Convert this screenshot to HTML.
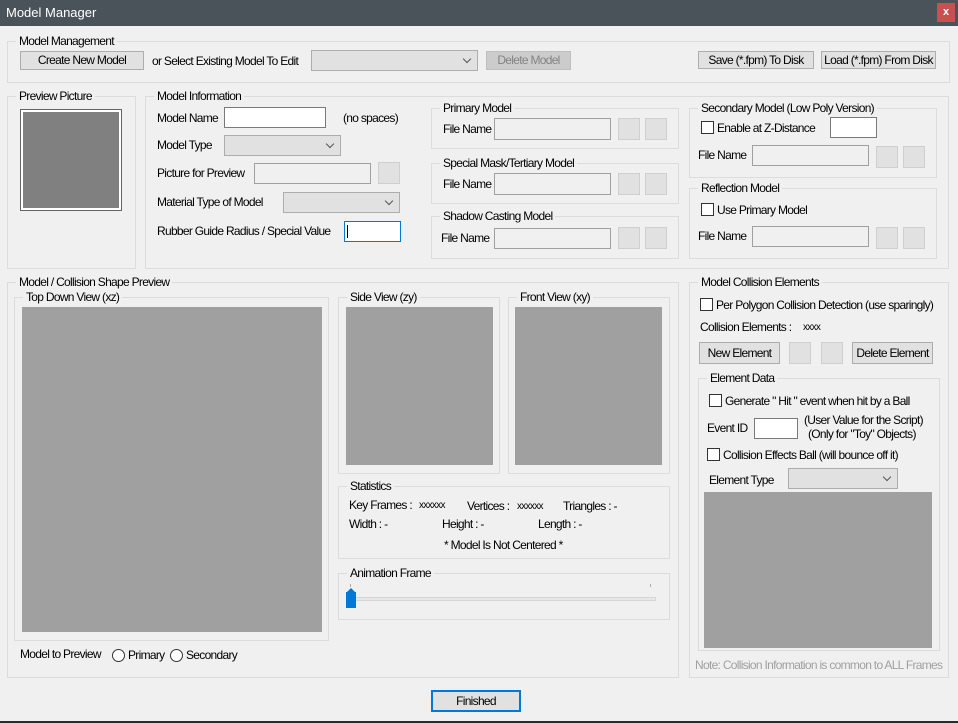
<!DOCTYPE html>
<html><head><meta charset="utf-8"><style>
*{box-sizing:border-box;margin:0;padding:0}
body{width:958px;height:723px;background:#f0f0f0;position:relative;overflow:hidden;font-family:"Liberation Sans",sans-serif;font-size:12px;color:#000}
.a{position:absolute}
.t{position:absolute;white-space:nowrap;line-height:14px;letter-spacing:-0.7px}
.g{position:absolute;border:1px solid #dcdcdc}
.g>.l{position:absolute;top:-8px;left:8px;background:#f0f0f0;padding:0 3px;white-space:nowrap;line-height:14px;letter-spacing:-0.7px}
.in{position:absolute;background:#fff;border:1px solid #7a7a7a}
.di{position:absolute;background:#f0f0f0;border:1px solid #a0a0a0}
.bt{position:absolute;background:#e1e1e1;border:1px solid #adadad;text-align:center;line-height:17px;letter-spacing:-0.7px;white-space:nowrap}
.sb{position:absolute;background:#e1e1e1;border:1px solid #cfcfcf}
.cb{position:absolute;background:#e1e1e1;border:1px solid #adadad}
.cb:after{content:"";position:absolute;right:7px;top:5px;width:5px;height:5px;border-right:1px solid #555;border-bottom:1px solid #555;transform:rotate(45deg)}
.ck{position:absolute;width:13px;height:13px;background:#fff;border:1px solid #333}
.gr{position:absolute;background:#a0a0a0}
.rd{position:absolute;width:13px;height:13px;border-radius:50%;border:1px solid #333;background:#fff}
</style></head><body>
<div class="a" style="left:0;top:0;width:958px;height:26px;background:#4b535a"></div>
<div class="t" style="left:6px;top:6px;color:#fff;font-size:13px;letter-spacing:0">Model Manager</div>
<div class="a" style="left:937px;top:3px;width:18px;height:19px;background:#c75050;color:#fff;font-size:11px;font-weight:bold;text-align:center;line-height:18px">x</div>

<div class="g" style="left:7px;top:41px;width:943px;height:42px"><span class="l">Model Management</span></div>
<div class="bt" style="left:20px;top:51px;width:124px;height:19px">Create New Model</div>
<div class="t" style="left:152px;top:54px">or Select Existing Model To Edit</div>
<div class="cb" style="left:311px;top:50px;width:167px;height:21px"></div>
<div class="bt" style="left:486px;top:51px;width:85px;height:19px;background:#cccccc;border-color:#bfbfbf;color:#838383">Delete Model</div>
<div class="bt" style="left:698px;top:51px;width:116px;height:18px">Save (*.fpm) To Disk</div>
<div class="bt" style="left:821px;top:51px;width:115px;height:18px">Load (*.fpm) From Disk</div>

<div class="g" style="left:7px;top:96px;width:129px;height:173px"><span class="l">Preview Picture</span></div>
<div class="a" style="left:20px;top:109px;width:102px;height:102px;border:1px solid #646464;background:#fff;padding:2px"><div style="width:100%;height:100%;background:#808080"></div></div>

<div class="g" style="left:145px;top:96px;width:804px;height:173px"><span class="l">Model Information</span></div>
<div class="t" style="left:157px;top:111px">Model Name</div>
<div class="in" style="left:224px;top:107px;width:102px;height:21px"></div>
<div class="t" style="left:343px;top:111px">(no spaces)</div>
<div class="t" style="left:157px;top:138px">Model Type</div>
<div class="cb" style="left:224px;top:135px;width:117px;height:21px"></div>
<div class="t" style="left:157px;top:166px">Picture for Preview</div>
<div class="di" style="left:254px;top:163px;width:117px;height:21px"></div>
<div class="sb" style="left:378px;top:162px;width:22px;height:22px"></div>
<div class="t" style="left:157px;top:195px">Material Type of Model</div>
<div class="cb" style="left:283px;top:192px;width:117px;height:21px"></div>
<div class="t" style="left:157px;top:224px">Rubber Guide Radius / Special Value</div>
<div class="in" style="left:344px;top:221px;width:57px;height:21px;border-color:#0078d7"></div>
<div class="a" style="left:347px;top:225px;width:1px;height:13px;background:#000"></div>

<div class="g" style="left:431px;top:108px;width:248px;height:41px"><span class="l">Primary Model</span></div>
<div class="t" style="left:443px;top:122px">File Name</div>
<div class="di" style="left:494px;top:118px;width:117px;height:22px"></div>
<div class="sb" style="left:618px;top:118px;width:22px;height:22px"></div>
<div class="sb" style="left:645px;top:118px;width:22px;height:22px"></div>
<div class="g" style="left:431px;top:163px;width:248px;height:41px"><span class="l">Special Mask/Tertiary Model</span></div>
<div class="t" style="left:443px;top:177px">File Name</div>
<div class="di" style="left:494px;top:173px;width:117px;height:22px"></div>
<div class="sb" style="left:618px;top:173px;width:22px;height:22px"></div>
<div class="sb" style="left:645px;top:173px;width:22px;height:22px"></div>
<div class="g" style="left:431px;top:216px;width:248px;height:43px"><span class="l">Shadow Casting Model</span></div>
<div class="t" style="left:441px;top:231px">File Name</div>
<div class="di" style="left:494px;top:228px;width:117px;height:21px"></div>
<div class="sb" style="left:618px;top:227px;width:22px;height:22px"></div>
<div class="sb" style="left:645px;top:227px;width:22px;height:22px"></div>

<div class="g" style="left:689px;top:108px;width:248px;height:70px"><span class="l">Secondary Model (Low Poly Version)</span></div>
<div class="ck" style="left:701px;top:121px"></div>
<div class="t" style="left:717px;top:121px">Enable at Z-Distance</div>
<div class="in" style="left:830px;top:117px;width:47px;height:21px"></div>
<div class="t" style="left:698px;top:148px">File Name</div>
<div class="di" style="left:752px;top:145px;width:117px;height:21px"></div>
<div class="sb" style="left:876px;top:146px;width:22px;height:22px"></div>
<div class="sb" style="left:903px;top:146px;width:22px;height:22px"></div>
<div class="g" style="left:689px;top:188px;width:248px;height:71px"><span class="l">Reflection Model</span></div>
<div class="ck" style="left:701px;top:203px"></div>
<div class="t" style="left:717px;top:203px">Use Primary Model</div>
<div class="t" style="left:698px;top:229px">File Name</div>
<div class="di" style="left:752px;top:226px;width:117px;height:21px"></div>
<div class="sb" style="left:876px;top:227px;width:22px;height:22px"></div>
<div class="sb" style="left:903px;top:227px;width:22px;height:22px"></div>

<div class="g" style="left:7px;top:282px;width:672px;height:396px"><span class="l">Model / Collision Shape Preview</span></div>
<div class="g" style="left:14px;top:297px;width:315px;height:344px"><span class="l">Top Down View (xz)</span></div>
<div class="gr" style="left:22px;top:307px;width:300px;height:325px"></div>
<div class="g" style="left:338px;top:297px;width:162px;height:177px"><span class="l">Side View (zy)</span></div>
<div class="gr" style="left:346px;top:307px;width:147px;height:158px"></div>
<div class="g" style="left:508px;top:297px;width:162px;height:177px"><span class="l">Front View (xy)</span></div>
<div class="gr" style="left:515px;top:307px;width:147px;height:158px"></div>
<div class="g" style="left:338px;top:486px;width:332px;height:73px"><span class="l">Statistics</span></div>
<div class="t" style="left:349px;top:498px">Key Frames :</div>
<div class="t" style="left:419px;top:499px;font-size:10px">xxxxxx</div>
<div class="t" style="left:467px;top:499px">Vertices :</div>
<div class="t" style="left:517px;top:500px;font-size:10px">xxxxxx</div>
<div class="t" style="left:563px;top:499px">Triangles :  -</div>
<div class="t" style="left:349px;top:517px">Width :  -</div>
<div class="t" style="left:442px;top:517px">Height :  -</div>
<div class="t" style="left:538px;top:517px">Length :  -</div>
<div class="t" style="left:444px;top:538px">* Model Is Not Centered *</div>
<div class="g" style="left:338px;top:573px;width:332px;height:47px"><span class="l">Animation Frame</span></div>
<div class="a" style="left:348px;top:597px;width:308px;height:4px;background:#e7e7e7;border:1px solid #d6d6d6"></div>
<div class="a" style="left:350px;top:584px;width:1px;height:3px;background:#aaa"></div>
<div class="a" style="left:650px;top:584px;width:1px;height:3px;background:#aaa"></div>
<div class="a" style="left:346px;top:592px;width:10px;height:16px;background:#0078d7"></div>
<div class="a" style="left:346px;top:588px;width:0;height:0;border-left:5px solid transparent;border-right:5px solid transparent;border-bottom:5px solid #0078d7"></div>
<div class="t" style="left:20px;top:647px">Model to Preview</div>
<div class="rd" style="left:112px;top:649px"></div>
<div class="t" style="left:128px;top:648px">Primary</div>
<div class="rd" style="left:170px;top:649px"></div>
<div class="t" style="left:186px;top:648px">Secondary</div>

<div class="g" style="left:689px;top:282px;width:260px;height:396px"><span class="l">Model Collision Elements</span></div>
<div class="ck" style="left:700px;top:298px"></div>
<div class="t" style="left:716px;top:298px">Per Polygon Collision Detection (use sparingly)</div>
<div class="t" style="left:700px;top:320px">Collision Elements :</div>
<div class="t" style="left:803px;top:321px;font-size:10px">xxxx</div>
<div class="bt" style="left:699px;top:342px;width:81px;height:22px;line-height:20px">New Element</div>
<div class="sb" style="left:789px;top:342px;width:22px;height:22px"></div>
<div class="sb" style="left:821px;top:342px;width:22px;height:22px"></div>
<div class="bt" style="left:852px;top:342px;width:81px;height:22px;line-height:20px">Delete Element</div>
<div class="g" style="left:698px;top:378px;width:242px;height:273px"><span class="l">Element Data</span></div>
<div class="ck" style="left:709px;top:394px"></div>
<div class="t" style="left:725px;top:394px">Generate " Hit " event when hit by a Ball</div>
<div class="t" style="left:707px;top:421px">Event ID</div>
<div class="in" style="left:754px;top:418px;width:44px;height:21px"></div>
<div class="t" style="left:804px;top:413px">(User Value for the Script)</div>
<div class="t" style="left:808px;top:427px">(Only for "Toy" Objects)</div>
<div class="ck" style="left:707px;top:448px"></div>
<div class="t" style="left:723px;top:448px">Collision Effects Ball (will bounce off it)</div>
<div class="t" style="left:709px;top:473px">Element Type</div>
<div class="cb" style="left:788px;top:468px;width:110px;height:21px"></div>
<div class="gr" style="left:704px;top:492px;width:228px;height:156px"></div>
<div class="t" style="left:695px;top:658px;color:#a0a0a0">Note: Collision Information is common to ALL Frames</div>

<div class="bt" style="left:431px;top:690px;width:90px;height:22px;border:2px solid #0078d7;line-height:18px">Finished</div>
<div class="a" style="left:0;top:721px;width:958px;height:2px;background:#2b2b2b"></div>
</body></html>
